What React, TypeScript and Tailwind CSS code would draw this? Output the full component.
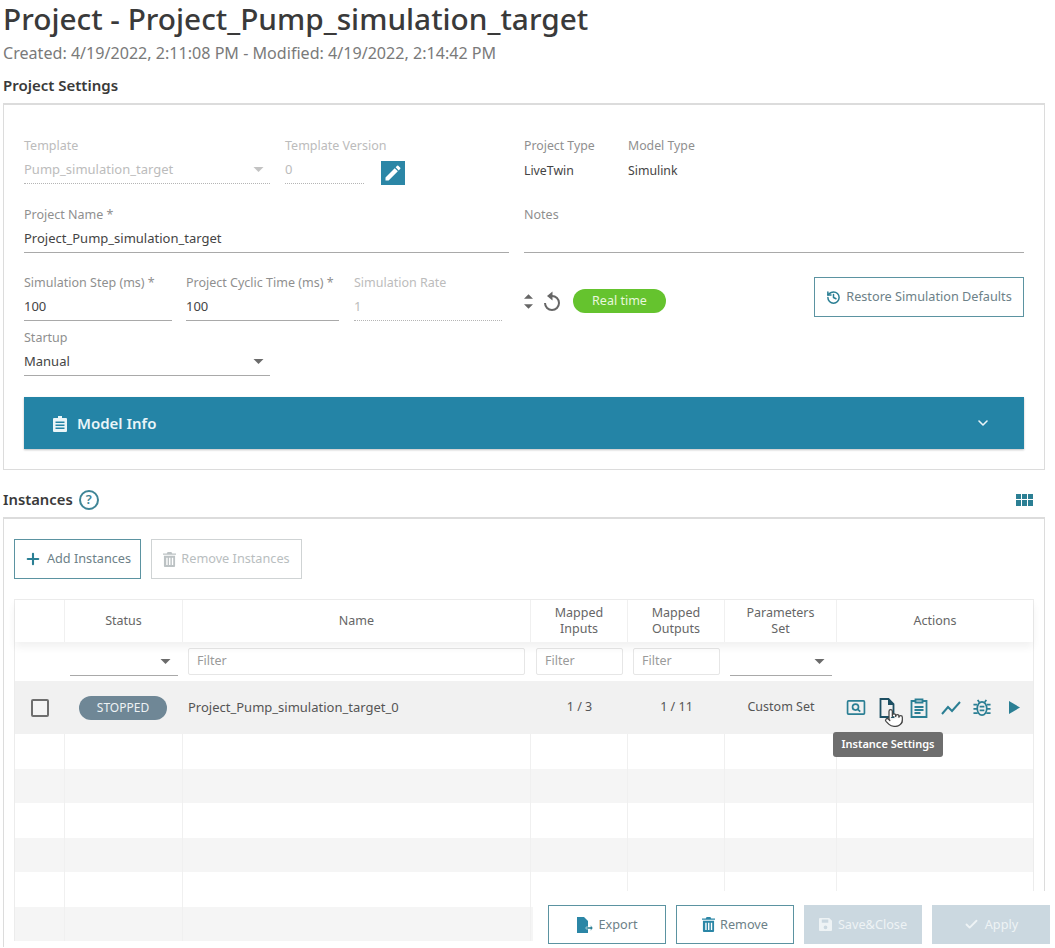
// Project detail page: settings panel, instances grid, footer actions.
import { Check, ChevronDown, History, Plus, Pointer } from 'lucide-react'
import type { ReactNode } from 'react'

const COLS = 'grid grid-cols-[50px_118px_348px_97px_97px_112px_196px]'

function Caret({ className = '' }: { className?: string }) {
  return (
    <svg viewBox="0 0 12 6" className={`h-[5px] w-[11px] fill-[#6b6b6b] ${className}`}>
      <path d="M0 0h12L6 6z" />
    </svg>
  )
}

function Field({
  label,
  value,
  width,
  disabled,
  caret,
}: {
  label: string
  value?: string
  width: string
  disabled?: boolean
  caret?: boolean
}) {
  return (
    <div className={`shrink-0 ${width}`}>
      <div className={`h-[20px] whitespace-nowrap text-[12.5px] leading-[20px] ${disabled ? 'text-[#bcbcbc]' : 'text-[#8f8f8f]'}`}>
        {label}
      </div>
      <div
        className={`flex h-[28px] items-center justify-between text-[13px] ${
          disabled
            ? 'border-b border-dotted border-[#b5b5b5] text-[#bcbcbc]'
            : 'border-b border-[#a9a9a9] text-[#444]'
        }`}
      >
        <span>{value}</span>
        {caret && <Caret className={`mr-[6px] ${disabled ? 'opacity-40' : ''}`} />}
      </div>
    </div>
  )
}

function OutlineButton({ children, width, muted }: { children: ReactNode; width: string; muted?: boolean }) {
  return (
    <div
      className={`flex h-[40px] items-center justify-center gap-[5px] border text-[12.7px] ${width} ${
        muted ? 'border-[#cfd3d4] text-[#b9bec0]' : 'border-[#5b93a1] bg-white text-[#6d8188]'
      }`}
    >
      {children}
    </div>
  )
}

function DisabledButton({ children }: { children: ReactNode }) {
  return (
    <div className="flex h-[39px] w-[118px] items-center justify-center gap-[6px] bg-[#cbd8e0] text-[12.7px] text-[#eef3f5]">
      {children}
    </div>
  )
}

function TrashIcon({ className = '' }: { className?: string }) {
  return (
    <svg viewBox="0 0 14 16" className={`h-[15px] w-[13px] ${className}`} fill="currentColor">
      <path d="M5 0h4l1 1.500h4V3H0V1.500h4zM1 4h12v11a1 1 0 0 1-1 1H2a1 1 0 0 1-1-1zm2.500 2v8h1.500V6zm3 0v8H8V6zm3 0v8H11V6z" fillRule="evenodd" />
    </svg>
  )
}

function HeaderCell({ children }: { children: ReactNode }) {
  return (
    <div className="flex items-center justify-center border-r border-[#f0f0f0] text-center text-[12.5px] leading-[16px] text-[#666] last:border-r-0">
      {children}
    </div>
  )
}

function FilterInput() {
  return (
    <div className="flex h-[27px] flex-1 items-center rounded-[2px] border border-[#e6e6e6] bg-white pl-[8px] text-[12.5px] text-[#9a9a9a]">
      Filter
    </div>
  )
}

function FilterSelect() {
  return (
    <div className="flex h-[28px] flex-1 items-center justify-end border-b border-[#a9a9a9] pr-[7px]">
      <Caret />
    </div>
  )
}

function EmptyRow({ shaded }: { shaded?: boolean }) {
  const cell = 'border-r border-[#f0f0f0] last:border-r-0'
  return (
    <div className={`${COLS} h-[34.5px] ${shaded ? 'bg-[#f5f5f5]' : 'bg-white'}`}>
      {[0, 1, 2, 3, 4, 5, 6].map((i) => (
        <div key={i} className={cell} />
      ))}
    </div>
  )
}

function ActionIcons() {
  const teal = '#2b7f94'
  return (
    <div className="flex items-center pl-[9px] text-[#2b7f94]">
      {/* preview */}
      <svg viewBox="0 0 20 16" className="h-[15px] w-[20px]" fill="none" stroke={teal} strokeWidth="1.800">
        <rect x="1" y="1" width="18" height="14" rx="1" />
        <circle cx="9.500" cy="7.500" r="3.200" />
        <path d="M12 10l2.500 2.500" />
      </svg>
      {/* instance settings */}
      <svg viewBox="0 0 16 20" className="ml-[13px] h-[20px] w-[16px]" fill="none">
        <path d="M1.500 1h8l5 5v13h-13z" stroke="#1d4f63" strokeWidth="1.800" />
        <path d="M9 1l6 6H9z" fill="#1d4f63" />
      </svg>
      {/* log */}
      <svg viewBox="0 0 18 20" className="ml-[15px] h-[20px] w-[18px]" fill="none" stroke={teal} strokeWidth="1.800">
        <path d="M5.500 3H1.500v16h15V3h-4" />
        <path d="M5.500 1.500h7v3h-7zM4.500 9h9M4.500 12h9M4.500 15h6" />
      </svg>
      {/* trend */}
      <svg viewBox="0 0 20 14" className="ml-[13px] h-[14px] w-[20px]" fill="none" stroke={teal} strokeWidth="2">
        <path d="M1 13l6-7 4 4 8-9" />
      </svg>
      {/* debug */}
      <svg viewBox="0 0 18 20" className="ml-[12px] h-[19px] w-[18px]" fill="none" stroke={teal} strokeWidth="1.800">
        <ellipse cx="9" cy="11" rx="5" ry="7" />
        <path d="M6 4.500L4.500 2M12 4.500L13.500 2M0 7h4M14 7h4M0 11.500h4M14 11.500h4M0 16h4.500M13.500 16H18M6.500 9h5M6.500 13h5" />
      </svg>
      {/* run */}
      <svg viewBox="0 0 12 14" className="ml-[18px] h-[13px] w-[11px]" fill={teal}>
        <path d="M0 0l12 7-12 7z" />
      </svg>
    </div>
  )
}

export default function App() {
  return (
    <div className="relative h-[948px] w-[1055px] overflow-hidden bg-white font-['Noto_Sans',sans-serif]">
      <div className="pl-[3px]">
        <h1 className="h-[40px] whitespace-nowrap text-[29.8px] leading-[38px] font-medium text-[#3a3a3a]">
          Project - Project_Pump_simulation_target
        </h1>
        <div className="mt-[2px] h-[22px] whitespace-nowrap text-[16.1px] leading-[22px] text-[#7a7a7a]">
          Created: 4/19/2022, 2:11:08 PM - Modified: 4/19/2022, 2:14:42 PM
        </div>
        <div className="mt-[11px] h-[28px] text-[15px] leading-[20px] font-semibold text-[#3a3a3a]">Project Settings</div>
      </div>

      {/* settings panel */}
      <section className="ml-[3px] h-[367px] w-[1042px] border border-t-2 border-[#dcdcdc] px-[20px] pt-[31px]">
        <div className="flex h-[48px]">
          <Field label="Template" value="Pump_simulation_target" width="w-[246px]" disabled caret />
          <Field label="Template Version" value="0" width="ml-[15px] w-[79px]" disabled />
          <div className="ml-[17px] mt-[25px] flex h-[24px] w-[24px] items-center justify-center bg-[#2b86a6]">
            <svg viewBox="0 0 24 24" className="h-[20px] w-[20px] fill-white">
              <path d="M3 17.250V21h3.750L17.810 9.940l-3.750-3.750zM20.710 7.040a1 1 0 0 0 0-1.410l-2.340-2.340a1 1 0 0 0-1.410 0l-1.830 1.830 3.750 3.750z" />
            </svg>
          </div>
          <div className="ml-[119px] w-[104px]">
            <div className="h-[20px] text-[12.3px] leading-[20px] text-[#8f8f8f]">Project Type</div>
            <div className="h-[28px] text-[12.3px] leading-[30px] text-[#444]">LiveTwin</div>
          </div>
          <div>
            <div className="h-[20px] text-[12.3px] leading-[20px] text-[#8f8f8f]">Model Type</div>
            <div className="h-[28px] text-[12.3px] leading-[30px] text-[#444]">Simulink</div>
          </div>
        </div>

        <div className="mt-[21px] flex">
          <Field label="Project Name *" value="Project_Pump_simulation_target" width="w-[485px]" />
          <Field label="Notes" width="ml-[15px] w-[500px]" />
        </div>

        <div className="mt-[20px] flex items-start">
          <Field label="Simulation Step (ms) *" value="100" width="w-[148px]" />
          <Field label="Project Cyclic Time (ms) *" value="100" width="ml-[14px] w-[153px]" />
          <Field label="Simulation Rate" value="1" width="ml-[15px] w-[148px]" disabled />
          <div className="ml-[22px] mt-[16px] flex h-[24px] items-center">
            <div className="flex w-[10px] flex-col gap-[5px]">
              <svg viewBox="0 0 10 5" className="h-[5px] w-[9px] fill-[#666]"><path d="M0 5h10L5 0z" /></svg>
              <svg viewBox="0 0 10 5" className="h-[5px] w-[9px] fill-[#666]"><path d="M0 0h10L5 5z" /></svg>
            </div>
            <svg viewBox="0 0 18 20" className="ml-[9px] h-[20px] w-[18px]" fill="none">
              <path d="M9 5a7 7 0 1 1-7 7" stroke="#666" strokeWidth="2" />
              <path d="M9.500 0.500L4 5l5.500 4.500z" fill="#666" />
            </svg>
            <div className="ml-[12px] flex h-[24px] w-[93px] items-center justify-center rounded-full bg-[#65c32e] text-[12.5px] text-[#e8f7de]">
              Real time
            </div>
          </div>
          <div className="ml-auto mt-[4px]">
            <OutlineButton width="w-[210px]">
              <History className="h-[15px] w-[15px] text-[#2b7f94]" strokeWidth={2.400} />
              Restore Simulation Defaults
            </OutlineButton>
          </div>
        </div>

        <div className="mt-[7px]">
          <Field label="Startup" value="Manual" width="w-[246px]" caret />
        </div>

        <div className="mt-[21px] flex h-[52px] items-center justify-between bg-[#2484a6] pl-[29px] pr-[33px] shadow-[0_1px_2px_rgba(0,0,0,0.25)]">
          <div className="flex items-center gap-[10px] pt-px text-[15px] font-semibold text-[#eaf5f8]">
            <svg viewBox="0 0 14 16" className="h-[16px] w-[14px] fill-[#eaf5f8]">
              <path
                fillRule="evenodd"
                d="M5 0h4v2h4a1 1 0 0 1 1 1v12a1 1 0 0 1-1 1H1a1 1 0 0 1-1-1V3a1 1 0 0 1 1-1h4zM2.500 5.500V7h9V5.500zm0 3V10h9V8.500zm0 3V13h9v-1.500z"
              />
            </svg>
            Model Info
          </div>
          <ChevronDown className="h-[16px] w-[16px] text-[#eaf5f8]" strokeWidth={2.400} />
        </div>
      </section>

      {/* instances heading */}
      <div className="mb-[3px] mr-[22px] mt-[15px] flex h-[29px] items-center justify-between pl-[3px]">
        <div className="flex items-center gap-[6px]">
          <span className="text-[14.8px] font-semibold text-[#3a3a3a]">Instances</span>
          <span className="flex h-[20px] w-[20px] items-center justify-center rounded-full border-2 border-[#3f8596] text-[13px] font-semibold text-[#3f8596]">
            ?
          </span>
        </div>
        <div className="grid h-[12px] w-[17px] grid-cols-3 grid-rows-2 gap-[1px]">
          {[0, 1, 2, 3, 4, 5].map((i) => (
            <span key={i} className="bg-[#2b7f94]" />
          ))}
        </div>
      </div>

      {/* instances panel */}
      <section className="ml-[3px] h-[430px] w-[1042px] border-x border-t-2 border-[#dcdcdc] px-[10px] pt-[20px]">
        <div className="flex gap-[10px]">
          <OutlineButton width="w-[127px]">
            <Plus className="h-[18px] w-[18px] text-[#2b7f94]" strokeWidth={2.800} />
            Add Instances
          </OutlineButton>
          <OutlineButton width="w-[151px]" muted>
            <TrashIcon className="text-[#bcc2c4]" />
            Remove Instances
          </OutlineButton>
        </div>

        <div className="mt-[20px] w-[1020px] border-x border-t border-[#ececec]">
          <div className={`${COLS} relative h-[42px] shadow-[0_5px_8px_rgba(0,0,0,0.06)]`}>
            <HeaderCell>{''}</HeaderCell>
            <HeaderCell>Status</HeaderCell>
            <HeaderCell>Name</HeaderCell>
            <HeaderCell>
              Mapped
              <br />
              Inputs
            </HeaderCell>
            <HeaderCell>
              Mapped
              <br />
              Outputs
            </HeaderCell>
            <HeaderCell>
              Parameters
              <br />
              Set
            </HeaderCell>
            <HeaderCell>Actions</HeaderCell>
          </div>

          <div className={`${COLS} h-[39px] items-center`}>
            <div />
            <div className="flex px-[5px]"><FilterSelect /></div>
            <div className="flex pl-[5px] pr-[6px]"><FilterInput /></div>
            <div className="flex px-[5px]"><FilterInput /></div>
            <div className="flex px-[5px]"><FilterInput /></div>
            <div className="flex px-[5px]"><FilterSelect /></div>
            <div />
          </div>

          <div className={`${COLS} h-[53px] items-center bg-[#f1f1f1] text-[13px] text-[#555]`}>
            <div className="flex justify-center">
              <div className="h-[18px] w-[18px] rounded-[2px] border-2 border-[#6f6f6f] bg-white/30" />
            </div>
            <div className="flex justify-center pr-[2px]">
              <div className="flex h-[24px] w-[88px] items-center justify-center rounded-full bg-[#6f8796] text-[12px] text-[#eef2f4]">
                STOPPED
              </div>
            </div>
            <div className="pl-[5px]">Project_Pump_simulation_target_0</div>
            <div className="text-center text-[12.5px]">1 / 3</div>
            <div className="text-center text-[12.5px]">1 / 11</div>
            <div className="text-center text-[12.5px]">Custom Set</div>
            <ActionIcons />
          </div>

          <EmptyRow />
          <EmptyRow shaded />
          <EmptyRow />
          <EmptyRow shaded />
          <EmptyRow />
          <EmptyRow shaded />
        </div>
      </section>

      {/* tooltip and pointer over the action icons */}
      <div className="absolute left-[833px] top-[732px] flex h-[25px] w-[110px] items-center justify-center rounded-[3px] bg-[#6e6e6e] text-[11px] font-semibold text-white">
        Instance Settings
      </div>
      <Pointer className="absolute left-[884px] top-[706px] h-[24px] w-[20px] fill-white text-[#444]" strokeWidth={1.500} />

      {/* footer actions float over the grid */}
      <div className="absolute bottom-0 right-0 flex h-[57px] w-[522px] items-start gap-[10px] bg-white pl-[15px] pt-[14px]">
        <OutlineButton width="w-[118px] !h-[39px]">
          <svg viewBox="0 0 17 16" className="h-[16px] w-[17px]">
            <path d="M1 0h7l4 4v12H1z" fill="#2b86a6" />
            <path d="M10 10h4.500V8l2.500 3-2.500 3v-2H10z" fill="#2b7f94" stroke="#fff" strokeWidth=".5" />
          </svg>
          Export
        </OutlineButton>
        <OutlineButton width="w-[118px] !h-[39px]">
          <TrashIcon className="text-[#2b86a6]" />
          Remove
        </OutlineButton>
        <DisabledButton>
          <svg viewBox="0 0 14 14" className="h-[13px] w-[13px] fill-[#eef3f5]">
            <path
              fillRule="evenodd"
              d="M1 0h10l3 3v10a1 1 0 0 1-1 1H1a1 1 0 0 1-1-1V1a1 1 0 0 1 1-1zm2 1.500V5h7V1.500zM7 8a2 2 0 1 0 0 4 2 2 0 0 0 0-4z"
            />
          </svg>
          Save&amp;Close
        </DisabledButton>
        <DisabledButton>
          <Check className="h-[15px] w-[15px]" strokeWidth={3} />
          Apply
        </DisabledButton>
      </div>
    </div>
  )
}
